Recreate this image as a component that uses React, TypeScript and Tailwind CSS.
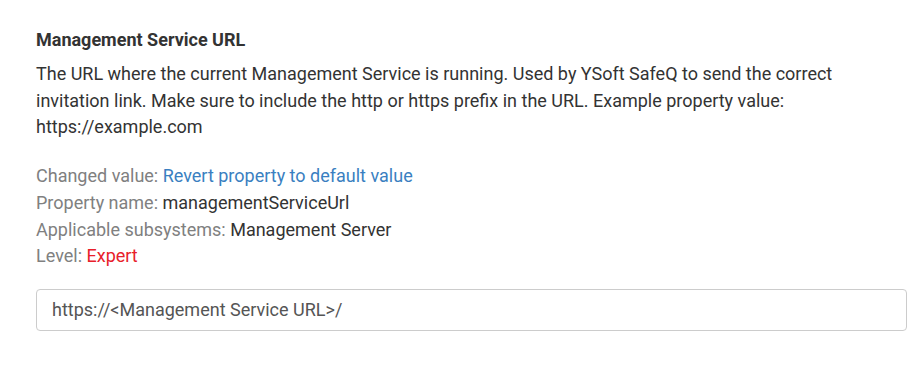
import React from "react";

export default function App() {
  return (
    <div className="w-[921px] h-[365px] bg-white" style={{ fontFamily: "Roboto, 'Liberation Sans', sans-serif" }}>
      <div className="pl-[36px] pr-[14px] pt-[28px]">
        <div className="text-[18px] leading-[24px] font-bold text-[#333333]">Management Service URL</div>
        <p className="mt-[9px] text-[18px] leading-[26.7px] text-[#333333]">
          The URL where the current Management Service is running. Used by YSoft SafeQ to send the correct invitation link. Make sure to include the http or https prefix in the URL. Example property value: https://example.com
        </p>
        <div className="mt-[22px] text-[18px] leading-[26.7px]">
          <div>
            <span className="text-[#808080]">Changed value: </span>
            <span className="text-[#3a7fc1]">Revert property to default value</span>
          </div>
          <div>
            <span className="text-[#808080]">Property name: </span>
            <span className="text-[#333333]">managementServiceUrl</span>
          </div>
          <div>
            <span className="text-[#808080]">Applicable subsystems: </span>
            <span className="text-[#333333]">Management Server</span>
          </div>
          <div>
            <span className="text-[#808080]">Level: </span>
            <span className="text-[#e8202a]">Expert</span>
          </div>
        </div>
        <div className="mt-[19px] h-[42px] border border-[#cccccc] rounded-[4px] flex items-center px-[15px] text-[18px] text-[#555555]">
          https://&lt;Management Service URL&gt;/
        </div>
      </div>
    </div>
  );
}
